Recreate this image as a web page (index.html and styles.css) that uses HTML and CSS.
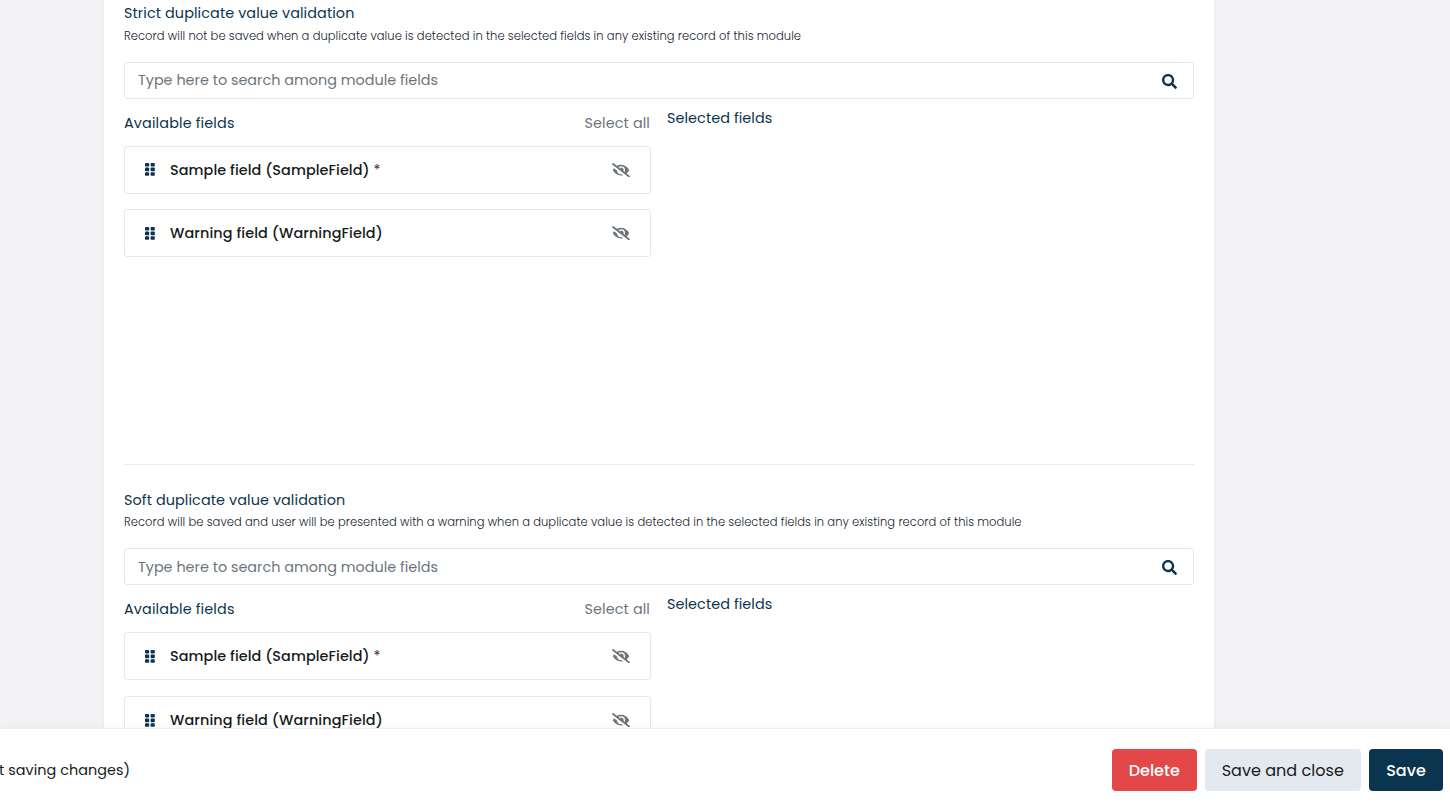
FILE: index.html
```html
<!DOCTYPE html>
<html lang="en">
<head>
<meta charset="utf-8">
<title>Duplicate value validation</title>
<link rel="stylesheet" href="styles.css">
</head>
<body>
<svg class="sprite" aria-hidden="true">
  <symbol id="search" viewBox="0 0 512 512"><path d="M505 442.7L405.3 343c-4.5-4.5-10.6-7-17-7H372c27.6-35.3 44-79.7 44-128C416 93.1 322.9 0 208 0S0 93.1 0 208s93.1 208 208 208c48.3 0 92.7-16.4 128-44v16.3c0 6.4 2.5 12.5 7 17l99.7 99.7c9.4 9.4 24.6 9.4 33.9 0l28.3-28.3c9.4-9.4 9.4-24.6.1-34zM208 336c-70.7 0-128-57.2-128-128 0-70.7 57.2-128 128-128 70.7 0 128 57.2 128 128 0 70.7-57.2 128-128 128z"/></symbol>
  <symbol id="eye-slash" viewBox="0 0 640 512"><path d="M320 400c-75.85 0-137.25-58.71-142.9-133.11L72.2 185.82c-13.79 17.3-26.48 35.59-36.72 55.59a32.35 32.35 0 0 0 0 29.19C89.71 376.41 197.07 448 320 448c26.91 0 52.87-4 77.89-10.46L346 397.39a144.13 144.13 0 0 1-26 2.61zm313.82 58.1l-110.55-85.44a331.25 331.25 0 0 0 81.25-102.07 32.35 32.35 0 0 0 0-29.19C550.29 135.59 442.93 64 320 64a308.15 308.15 0 0 0-147.32 37.7L45.46 3.37A16 16 0 0 0 23 6.18L3.37 31.45A16 16 0 0 0 6.18 53.9l588.36 454.73a16 16 0 0 0 22.46-2.81l19.64-25.27a16 16 0 0 0-2.82-22.45zM450.1 316.1l-39.3-30.38A94.75 94.75 0 0 0 416 256a94.76 94.76 0 0 0-121.31-92.21A47.65 47.65 0 0 1 304 192a46.64 46.64 0 0 1-1.54 10l-73.61-56.89A142.31 142.31 0 0 1 320 112a143.92 143.92 0 0 1 144 144c0 21.63-5.29 41.79-13.9 60.11z"/></symbol>
  <symbol id="grip" viewBox="0 0 10 13"><rect x="0" y="0" width="4.2" height="3.6" rx=".8"/><rect x="5.6" y="0" width="4.2" height="3.6" rx=".8"/><rect x="0" y="4.6" width="4.2" height="3.6" rx=".8"/><rect x="5.6" y="4.6" width="4.2" height="3.6" rx=".8"/><rect x="0" y="9.2" width="4.2" height="3.6" rx=".8"/><rect x="5.6" y="9.2" width="4.2" height="3.6" rx=".8"/></symbol>
</svg>
<div class="app">
  <main class="content">
    <div class="panel">
      <section class="rule strict">
        <h2 class="title">Strict duplicate value validation</h2>
        <p class="desc">Record will not be saved when a duplicate value is detected in the selected fields in any existing record of this module</p>
        <div class="search"><span class="placeholder">Type here to search among module fields</span><svg class="i-search"><use href="#search"/></svg></div>
        <div class="cols">
          <div class="col">
            <div class="head"><span class="available">Available fields</span><span class="all">Select all</span></div>
            <div class="card first"><svg class="i-grip"><use href="#grip"/></svg><span class="name sample">Sample field (SampleField) <span class="req">*</span></span><svg class="i-eye"><use href="#eye-slash"/></svg></div>
            <div class="card"><svg class="i-grip"><use href="#grip"/></svg><span class="name">Warning field (WarningField)</span><svg class="i-eye"><use href="#eye-slash"/></svg></div>
          </div>
          <div class="col"><span class="selected">Selected fields</span></div>
        </div>
      </section>
      <section class="rule soft">
        <h2 class="title">Soft duplicate value validation</h2>
        <p class="desc">Record will be saved and user will be presented with a warning when a duplicate value is detected in the selected fields in any existing record of this module</p>
        <div class="search"><span class="placeholder">Type here to search among module fields</span><svg class="i-search"><use href="#search"/></svg></div>
        <div class="cols">
          <div class="col">
            <div class="head"><span class="available">Available fields</span><span class="all">Select all</span></div>
            <div class="card first"><svg class="i-grip"><use href="#grip"/></svg><span class="name sample">Sample field (SampleField) <span class="req">*</span></span><svg class="i-eye"><use href="#eye-slash"/></svg></div>
            <div class="card"><svg class="i-grip"><use href="#grip"/></svg><span class="name">Warning field (WarningField)</span><svg class="i-eye"><use href="#eye-slash"/></svg></div>
          </div>
          <div class="col"><span class="selected">Selected fields</span></div>
        </div>
      </section>
    </div>
  </main>
  <footer class="footer">
    <span class="back">t saving changes)</span>
    <div class="actions">
      <button class="btn delete">Delete</button>
      <button class="btn close">Save and close</button>
      <button class="btn save">Save</button>
    </div>
  </footer>
</div>
</body>
</html>
```
FILE: styles.css
```css
* { box-sizing: border-box; }
body { margin: 0; font-family: Poppins, Inter, sans-serif; font-size: 14.4px; color: #162430; }
.sprite { display: none; }
svg { fill: currentColor; flex: none; }
.app { height: 803px; display: flex; flex-direction: column; overflow: hidden; background: #f3f3f5; }
.content { height: 728px; flex: none; overflow: hidden; padding: 0 236px 0 104px; }
.panel { height: 1000px; background: #fff; padding: 0 20px; box-shadow: 0 0 4px rgba(0,0,0,.06); }
.rule { display: flex; flex-direction: column; }
.strict { height: 464.5px; border-bottom: 1px solid #e9ebee; margin-bottom: 22.5px; }
.title { margin: 0; height: 26px; font-size: 14.4px; line-height: 26px; font-weight: 400; letter-spacing: .09px; color: #0b344e; white-space: nowrap; }
.desc { margin: 0; height: 36px; line-height: 20px; font-size: 11.5px; letter-spacing: .053px; font-weight: 300; white-space: nowrap; }
.soft .desc { height: 35px; line-height: 19px; }
.search { height: 37px; flex: none; border: 1.5px solid #e4e9ef; border-radius: 3px; display: flex; align-items: center; justify-content: space-between; padding: 0 16px 0 13px; }
.placeholder { color: #6c757d; }
.soft .placeholder { padding-top: 1px; }
.i-search { width: 15px; height: 15px; color: #0b344e; margin-top: 2px; }
.cols { display: grid; grid-template-columns: 527px 527px; gap: 16px; color: #0b344e; }
.head { height: 47px; display: flex; justify-content: space-between; line-height: 48px; }
.available { letter-spacing: .14px; }
.all { color: #6c757d; letter-spacing: .1px; margin-right: 1px; }
.card { height: 48px; border: 1px solid #e6e9ec; border-radius: 3px; display: flex; align-items: center; padding: 0 20px; }
.first { margin-bottom: 16px; }
.strict .first { height: 47.5px; margin-bottom: 15.5px; }
.strict .first .name { padding-top: 1px; }
.i-grip { width: 10px; height: 13px; color: #0b344e; }
.name { flex: 1; margin-left: 15px; font-weight: 500; letter-spacing: .1px; color: #161b20; white-space: nowrap; }
.sample { letter-spacing: .065px; }
.req { font-weight: 400; color: #4a2835; }
.i-eye { width: 18px; height: 14.4px; color: #6c757d; }
.selected { display: block; line-height: 38px; letter-spacing: .07px; }
.footer { height: 75px; position: relative; background: #fff; border-top: 1px solid #edeef0; box-shadow: 0 -2px 8px rgba(0,0,0,.03); display: flex; align-items: center; justify-content: space-between; padding: 8px 7px 0 0; color: #161b20; }
.back { margin-left: -1px; letter-spacing: .05px; }
.actions { display: flex; gap: 8px; }
.btn { height: 42px; border: 0; border-radius: 4px; padding: 0; font-family: inherit; font-size: 16px; font-weight: 400; }
.delete { width: 84.5px; background: #e34748; color: #fff; font-weight: 500; }
.close { width: 156.5px; background: #e4e9ef; color: #161b20; letter-spacing: .04px; }
.save { width: 74px; background: #0b344e; color: #fff; font-weight: 500; }
```
